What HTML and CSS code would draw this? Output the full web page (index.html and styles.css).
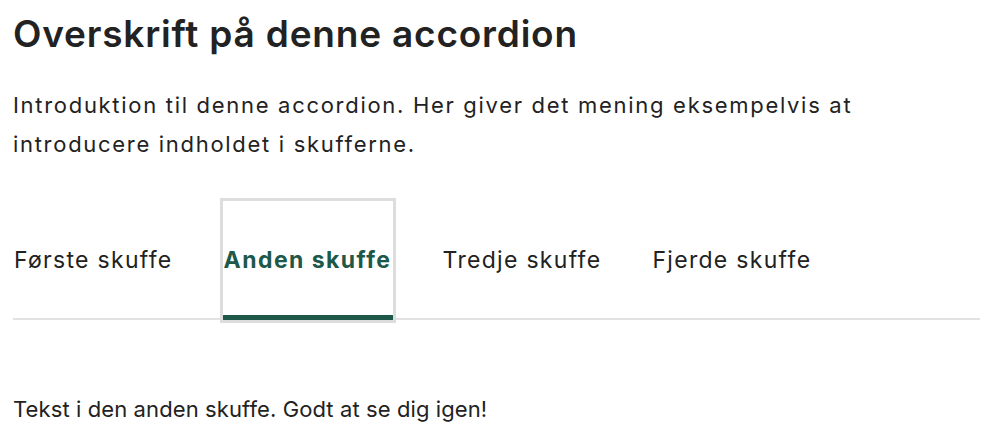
FILE: index.html
```html
<!DOCTYPE html>
<html lang="da">
<head>
  <meta charset="UTF-8">
  <meta name="viewport" content="width=device-width, initial-scale=1.0">
  <title>Accordion</title>
  <link rel="stylesheet" href="styles.css">
</head>
<body>
  <div class="accordion">
    <h1>Overskrift på denne accordion</h1>
    <p class="intro">Introduktion til denne accordion. Her giver det mening eksempelvis at introducere indholdet i skufferne.</p>
    <div class="tabs" role="tablist">
      <button class="tab" role="tab">Første skuffe</button>
      <button class="tab active" role="tab">Anden skuffe</button>
      <button class="tab" role="tab">Tredje skuffe</button>
      <button class="tab" role="tab">Fjerde skuffe</button>
    </div>
    <div class="panel">
      <p>Tekst i den anden skuffe. Godt at se dig igen!</p>
    </div>
  </div>
</body>
</html>
```

FILE: styles.css
```css
body {
  margin: 0;
  background-color: #FFFFFF;
  color: #222222;
  font-family: Inter, "Noto Sans", sans-serif;
}
.accordion {
  padding: 0 12px 0 13px;
}
h1 {
  font-size: 37px;
  font-weight: 600;
  line-height: 44px;
  letter-spacing: 0.8px;
  margin: 12px 0 0;
}
.intro {
  font-size: 22px;
  line-height: 39px;
  letter-spacing: 1.7px;
  margin: 30px 0 0;
  max-width: 880px;
}
.tabs {
  display: flex;
  gap: 49px;
  margin-top: 37px;
  border-bottom: 2px solid #e2e2e2;
}
.tab {
  font-family: inherit;
  font-size: 23px;
  line-height: 28px;
  letter-spacing: 1.3px;
  color: #222222;
  background: none;
  border: none;
  border-bottom: 5px solid transparent;
  padding: 45px 1px 41px;
  margin-bottom: -2px;
  cursor: pointer;
}
.tab.active {
  font-weight: 700;
  letter-spacing: 1.45px;
  color: #1d5849;
  border-bottom-color: #1d5849;
  outline: 3px solid #dddddd;
}
.panel p {
  font-size: 22px;
  line-height: 39px;
  letter-spacing: 0.1px;
  margin: 70px 0 0;
}
```
